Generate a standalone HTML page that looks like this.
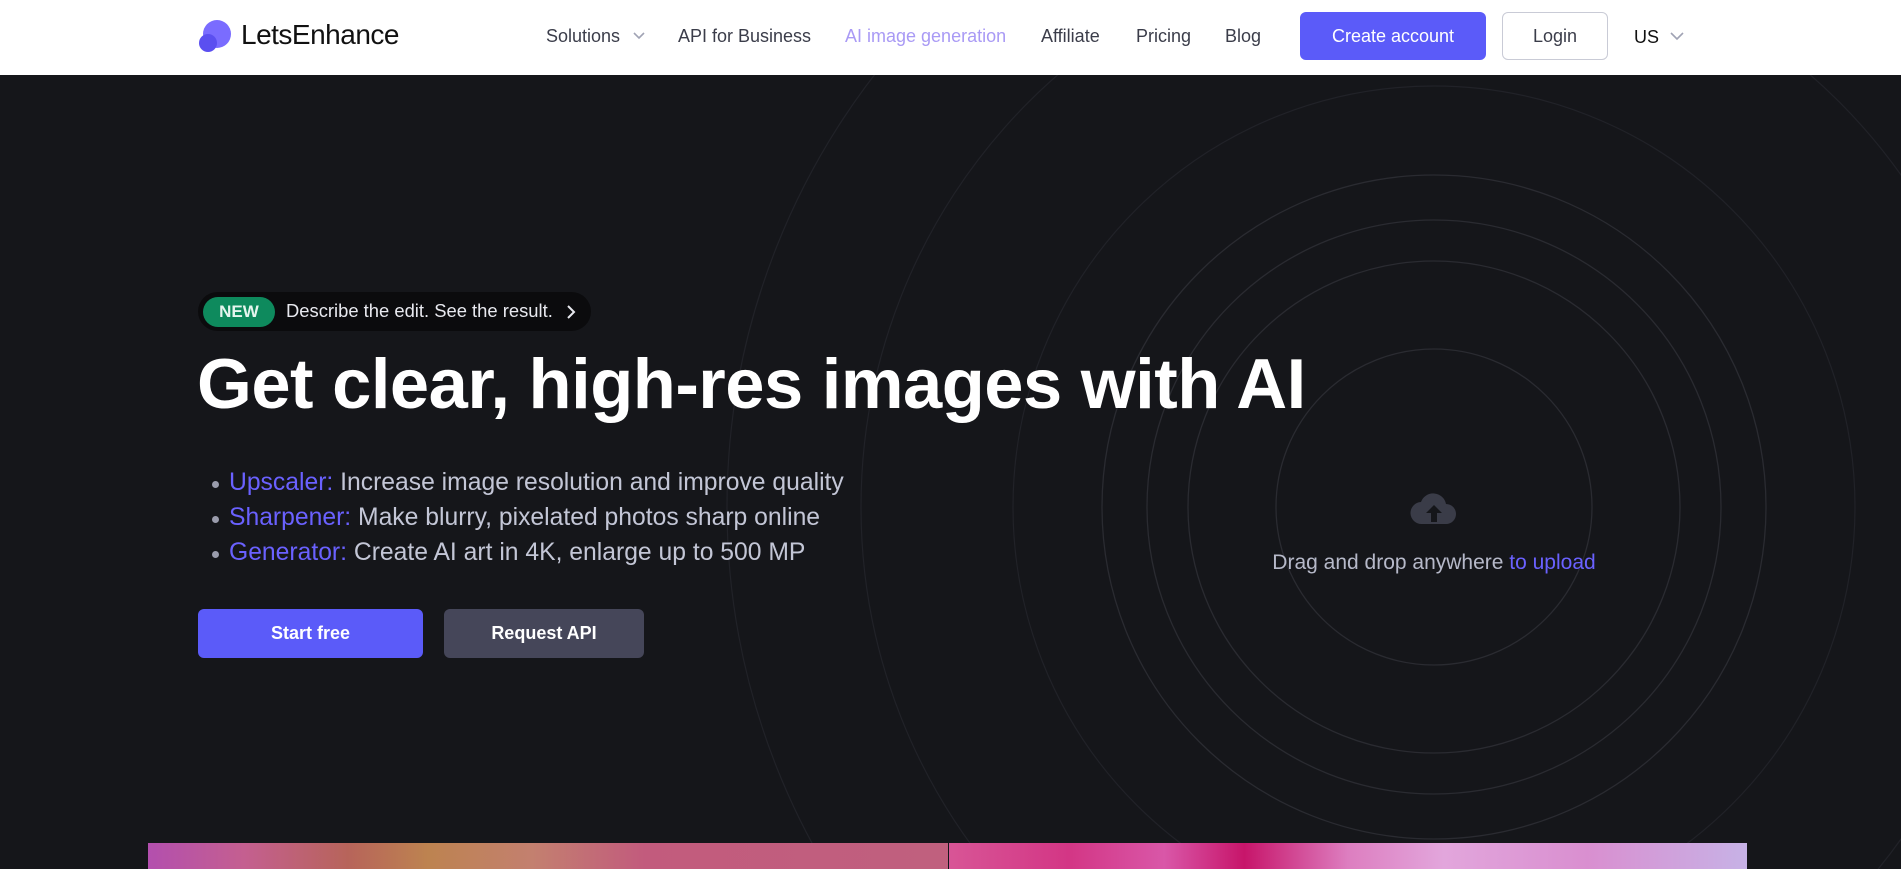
<!DOCTYPE html>
<html><head><style>
*{margin:0;padding:0;box-sizing:border-box}
html,body{width:1901px;height:869px;overflow:hidden}
body{background:#15161a;font-family:"Liberation Sans",sans-serif;position:relative}
.hdr{position:absolute;left:0;top:0;width:1901px;height:75px;background:#fff}
.hdr span{position:absolute;top:26px;font-size:18px;color:#3b3d4a}
.btn{position:absolute;display:flex;align-items:center;justify-content:center;border-radius:6px;font-size:18px}
.li{position:absolute;left:229px;font-size:24.7px;color:#c3c6d6;white-space:nowrap}
.li b{font-weight:normal;color:#6a61ff}
.li:before{content:"";position:absolute;left:-17px;top:12px;width:7px;height:7px;border-radius:50%;background:#9a9cac}
</style></head><body>
<svg style="position:absolute;left:0;top:0" width="1901" height="869">
<g fill="none" stroke="#2a2b31" stroke-width="1.3">
<circle cx="1434" cy="507" r="158"/><circle cx="1434" cy="507" r="246"/><circle cx="1434" cy="507" r="287"/><circle cx="1434" cy="507" r="332"/>
</g>
<g fill="none" stroke="#212228" stroke-width="1.2">
<circle cx="1434" cy="507" r="421"/><circle cx="1434" cy="507" r="573"/><circle cx="1434" cy="507" r="707"/>
</g></svg>
<div class="hdr">
<svg style="position:absolute;left:198px;top:19px" width="34" height="34"><circle cx="19" cy="15" r="14" fill="#7a6cff"/><circle cx="10" cy="24" r="9" fill="#5b4ff0"/></svg>
<div style="position:absolute;left:241px;top:19px;font-size:28px;color:#111;letter-spacing:-0.5px">LetsEnhance</div>
<span style="left:546px">Solutions</span>
<svg style="position:absolute;left:632px;top:31px" width="14" height="10"><path d="M2 2l5 5 5-5" fill="none" stroke="#a0a3b4" stroke-width="1.6"/></svg>
<span style="left:678px">API for Business</span>
<span style="left:845px;color:#a99af5">AI image generation</span>
<span style="left:1041px">Affiliate</span>
<span style="left:1136px">Pricing</span>
<span style="left:1225px">Blog</span>
<div class="btn" style="left:1300px;top:12px;width:186px;height:48px;background:#5b5bf9;color:#fff">Create account</div>
<div class="btn" style="left:1502px;top:12px;width:106px;height:48px;border:1px solid #c9cbd6;color:#3b3d4a">Login</div>
<span style="left:1634px;top:27px;color:#111">US</span>
<svg style="position:absolute;left:1669px;top:31px" width="16" height="10"><path d="M2 2l6 6 6-6" fill="none" stroke="#a0a3b4" stroke-width="1.6"/></svg>
</div>
<div style="position:absolute;left:198px;top:292px;width:393px;height:39px;border-radius:20px;background:#0b0b0d"></div>
<div style="position:absolute;left:203px;top:297px;width:72px;height:30px;border-radius:15px;background:#0e8a5d;color:#e5f5ee;font-weight:bold;font-size:17px;display:flex;align-items:center;justify-content:center">NEW</div>
<div style="position:absolute;left:286px;top:300px;font-size:18.4px;color:#e8e9ef">Describe the edit. See the result.</div>
<svg style="position:absolute;left:565px;top:303px" width="12" height="18"><path d="M3 3l6 6-6 6" fill="none" stroke="#e8e9ef" stroke-width="2"/></svg>
<div style="position:absolute;left:197px;top:343px;font-size:70.5px;font-weight:bold;color:#fff;letter-spacing:-0.5px;white-space:nowrap">Get clear, high-res images with AI</div>
<div class="li" style="top:469px"><b>Upscaler:</b> Increase image resolution and improve quality</div>
<div class="li" style="top:504px"><b>Sharpener:</b> Make blurry, pixelated photos sharp online</div>
<div class="li" style="top:539px"><b>Generator:</b> Create AI art in 4K, enlarge up to 500 MP</div>
<div class="btn" style="left:198px;top:609px;width:225px;height:49px;background:#5b5bf9;color:#fff;font-weight:bold">Start free</div>
<div class="btn" style="left:444px;top:609px;width:200px;height:49px;background:#454659;color:#fff;font-weight:bold">Request API</div>
<svg style="position:absolute;left:1410px;top:492px" width="48" height="34" viewBox="0 0 48 34"><path d="M12 32a11 11 0 0 1-1-22 13 13 0 0 1 25 2 10 10 0 0 1 0 20z" fill="#3a3c48"/><path d="M24 13l-8 8h5v9h6v-9h5z" fill="#15161a"/></svg>
<div style="position:absolute;left:1184px;top:551px;width:500px;text-align:center;font-size:21px;color:#b6b9c9">Drag and drop anywhere <span style="color:#6a61ff">to upload</span></div>
<div style="position:absolute;left:148px;top:843px;width:800px;height:26px;background:linear-gradient(90deg,#b34fae,#c45f90 12%,#b7645a 25%,#bd8350 35%,#c3806f 48%,#c25b7d 62%,#c0607e)"></div>
<div style="position:absolute;left:949px;top:843px;width:798px;height:26px;background:linear-gradient(90deg,#d85596,#d33685 15%,#d957a8 27%,#c7156a 37%,#dd7ec0 50%,#e2a6dc 62%,#d98fd0 80%,#c7b2e6)"></div>
</body></html>
